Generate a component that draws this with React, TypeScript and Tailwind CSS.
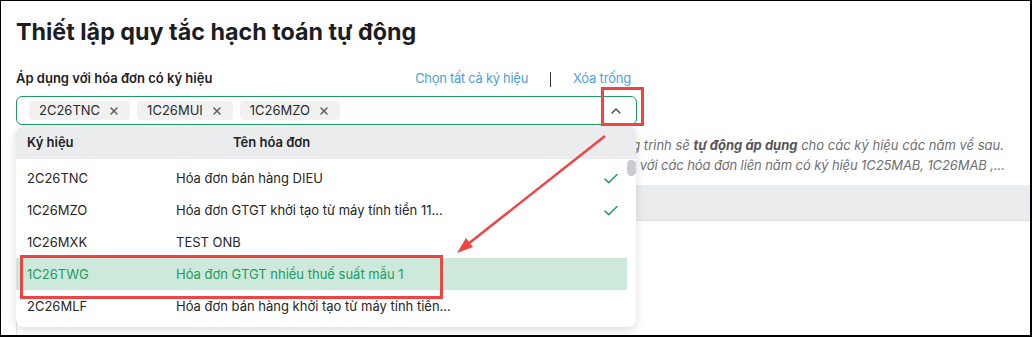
import { Check, ChevronUp, X } from "lucide-react";

/* ── Data ─────────────────────────────────────── */
const selectedTags = ["2C26TNC", "1C26MUI", "1C26MZO"];

const invoiceRows = [
  { code: "2C26TNC", name: "Hóa đơn bán hàng DIEU", checked: true },
  { code: "1C26MZO", name: "Hóa đơn GTGT khởi tạo từ máy tính tiền 11...", checked: true },
  { code: "1C26MXK", name: "TEST ONB", checked: false },
  { code: "1C26TWG", name: "Hóa đơn GTGT nhiều thuế suất mẫu 1", checked: false, active: true },
  { code: "2C26MLF", name: "Hóa đơn bán hàng khởi tạo từ máy tính tiền...", checked: false },
];

/* ── Tag chip inside the select ───────────────── */
const Tag = ({ label }: { label: string }) => (
  <span className="flex h-[19px] items-center gap-[8px] rounded-sm bg-[#f1f1f2] pl-[10px] pr-[10px] text-[13px] text-[#2a2a2a]">
    {label}
    <X size={12} strokeWidth={3} className="text-[#5f5f5f]" />
  </span>
);

/* ── Dropdown list (open) ─────────────────────── */
const Dropdown = () => (
  <div className="absolute left-[15px] top-[125px] h-[201px] w-[620px] rounded-lg bg-white shadow-[0_3px_10px_rgba(0,0,0,0.14)]">
    <div className="flex h-[33px] items-center rounded-t-lg bg-[#ebecee] text-[13px] font-semibold text-[#1f2124]">
      <span className="w-[217px] pl-[11px]">Ký hiệu</span>
      <span>Tên hóa đơn</span>
    </div>
    <div className="relative pt-[3px]">
      {invoiceRows.map((row) => (
        <div
          key={row.code}
          className={
            row.active
              ? "flex h-8 w-[611px] items-center bg-[#cde9dc] pt-[2px] text-[13px] text-[#1e9b63]"
              : "flex h-8 w-[611px] items-center pt-[2px] text-[13px] text-[#262626]"
          }
        >
          <span className="w-[160px] pl-[11px]">{row.code}</span>
          <span className="flex-1">{row.name}</span>
          {row.checked && (
            <Check size={18} strokeWidth={2} className="mr-[7px] text-[#1e9b63]" />
          )}
        </div>
      ))}
      <div className="absolute right-0 top-[1px] h-4 w-[9px] rounded-full bg-[#c9cbce]" />
    </div>
  </div>
);

/* ── Red annotation overlay ───────────────────── */
const Annotations = () => (
  <>
    <div className="absolute left-[600px] top-[86px] h-[39px] w-[43px] border-[3px] border-[#ee4444]" />
    <div className="absolute left-[19px] top-[254px] h-[44px] w-[423px] border-[3px] border-[#ee4444]" />
    <svg className="absolute left-0 top-0" width="1032" height="338" viewBox="0 0 1032 338">
      <line x1="604" y1="135" x2="462" y2="247" stroke="#ee4444" strokeWidth="2.5" />
      <polygon points="456,252 465,237 472,246" fill="#ee4444" />
    </svg>
  </>
);

export default function App() {
  return (
    <div className="relative flex h-[337px] w-[1032px] flex-col overflow-hidden border-b-2 border-l border-r-2 border-t border-black bg-white font-['Inter','Noto_Sans',sans-serif]">
      <div className="flex flex-1 flex-col pl-[15px] pt-[15px]">
        <h1 className="text-[23.3px] font-bold leading-8 text-[#1a1d21]">
          Thiết lập quy tắc hạch toán tự động
        </h1>

        <div className="mt-[21px] flex h-5 w-[621px] items-center">
          <span className="text-[13px] font-semibold text-[#1f2124]">
            Áp dụng với hóa đơn có ký hiệu
          </span>
          <div className="ml-auto flex items-center gap-[22px] pr-[6px] text-[13px] text-[#4d9fdb]">
            <span className="tracking-[-0.3px]">Chọn tất cả ký hiệu</span>
            <span className="h-[15px] w-px bg-[#333]" />
            <span className="tracking-[-0.2px]">Xóa trống</span>
          </div>
        </div>

        <div className="mt-[7px] flex h-[29px] w-[621px] items-center gap-[7px] rounded-md border border-[#1e9b63] pl-3">
          {selectedTags.map((t) => (
            <Tag key={t} label={t} />
          ))}
          <ChevronUp size={16} strokeWidth={2} className="ml-auto mr-[12px] text-[#444]" />
        </div>

        <div className="mt-[10px] text-[13px] italic leading-5 text-[#6f6f6f]">
          <p className="pl-[576px]">
            Chương trình sẽ <b className="font-bold text-[#555]">tự động áp dụng</b> cho các ký hiệu các năm về sau.
          </p>
          <p className="pl-[569px] tracking-[-0.1px]">Áp dụng với các hóa đơn liên năm có ký hiệu 1C25MAB, 1C26MAB ,...</p>
        </div>

        <div className="mt-[10px] h-9 border-b border-[#dcdde0] bg-[#ebecee]" />
        <div className="flex-1 border-l border-[#e3e3e3]" />
      </div>

      <Dropdown />
      <Annotations />
    </div>
  );
}
